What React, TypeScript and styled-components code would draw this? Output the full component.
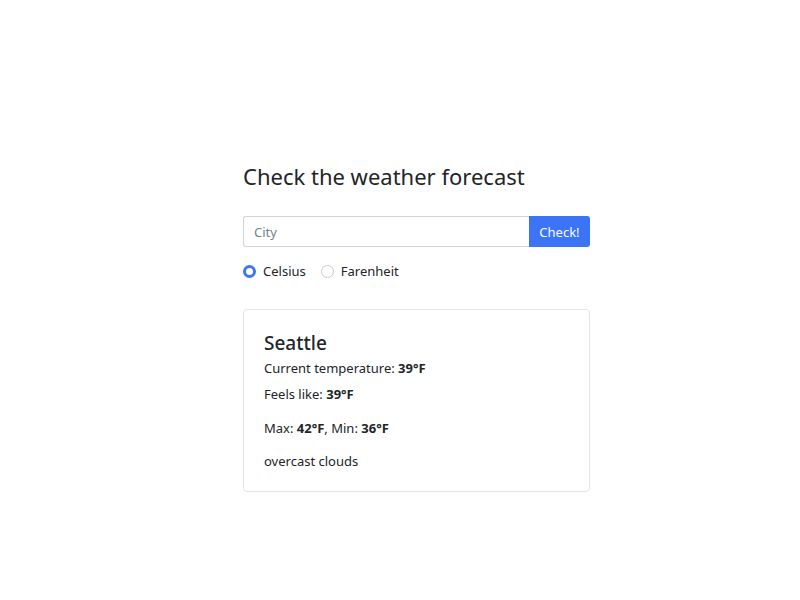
import React, { useState } from "react";
import styled, { createGlobalStyle } from "styled-components";

const GlobalStyle = createGlobalStyle`
  html, body { margin: 0; padding: 0; background: #ffffff; }
  body {
    font-family: "Noto Sans", "Open Sans", sans-serif;
    color: #212529;
    font-size: 13px;
  }
`;

const Page = styled.div`
  width: 800px;
  height: 600px;
  display: flex;
  justify-content: flex-start;
  box-sizing: border-box;
  padding: 158px 0 0 243px;
`;

const Container = styled.div`
  width: 347px;
  display: flex;
  flex-direction: column;
`;

const Title = styled.h1`
  margin: 0 0 22px 0;
  font-size: 22px;
  font-weight: 400;
  line-height: 36px;
  color: #212529;
`;

const InputGroup = styled.div`
  display: flex;
  height: 31px;
`;

const CityInput = styled.input`
  flex: 1;
  min-width: 0;
  box-sizing: border-box;
  height: 31px;
  border: 1px solid #ced4da;
  border-right: none;
  border-radius: 3px 0 0 3px;
  padding: 0 10px;
  font-family: inherit;
  font-size: 13px;
  color: #212529;
  outline: none;
  &::placeholder { color: #7a7f85; }
`;

const CheckButton = styled.button`
  width: 61px;
  height: 31px;
  border: none;
  border-radius: 0 3px 3px 0;
  background: #3b74f6;
  color: #ffffff;
  font-family: inherit;
  font-size: 13px;
  padding: 0;
  cursor: pointer;
`;

const RadioRow = styled.div`
  display: flex;
  gap: 15px;
  margin-top: 16px;
  height: 16px;
  align-items: center;
`;

const RadioLabel = styled.label`
  display: flex;
  align-items: center;
  gap: 7px;
  font-size: 13px;
  color: #212529;
  cursor: pointer;
`;

const RadioDot = styled.span<{ $checked: boolean }>`
  width: 13px;
  height: 13px;
  box-sizing: border-box;
  border-radius: 50%;
  border: ${(p) => (p.$checked ? "3.5px solid #3b74f6" : "1px solid #c6cbd1")};
  background: #ffffff;
  display: inline-block;
`;

const Card = styled.div`
  margin-top: 30px;
  border: 1px solid #e2e4e7;
  border-radius: 4px;
  padding: 20px 20px 20px 20px;
  display: flex;
  flex-direction: column;
`;

const CityName = styled.h2`
  margin: 0;
  font-size: 19px;
  font-weight: 500;
  line-height: 26px;
`;

const Line = styled.p<{ $gap?: number }>`
  margin: ${(p) => p.$gap ?? 0}px 0 0 0;
  font-size: 13px;
  line-height: 20px;
  b { font-weight: 700; }
`;

export default function App() {
  const [unit, setUnit] = useState<"c" | "f">("c");
  return (
    <>
      <GlobalStyle />
      <Page>
        <Container>
          <Title>Check the weather forecast</Title>
          <InputGroup>
            <CityInput placeholder="City" />
            <CheckButton>Check!</CheckButton>
          </InputGroup>
          <RadioRow>
            <RadioLabel onClick={() => setUnit("c")}>
              <RadioDot $checked={unit === "c"} />
              Celsius
            </RadioLabel>
            <RadioLabel onClick={() => setUnit("f")}>
              <RadioDot $checked={unit === "f"} />
              Farenheit
            </RadioLabel>
          </RadioRow>
          <Card>
            <CityName>Seattle</CityName>
            <Line $gap={2}>
              Current temperature: <b>39°F</b>
            </Line>
            <Line $gap={6}>
              Feels like: <b>39°F</b>
            </Line>
            <Line $gap={14}>
              Max: <b>42°F</b>, Min: <b>36°F</b>
            </Line>
            <Line $gap={13}>overcast clouds</Line>
          </Card>
        </Container>
      </Page>
    </>
  );
}
